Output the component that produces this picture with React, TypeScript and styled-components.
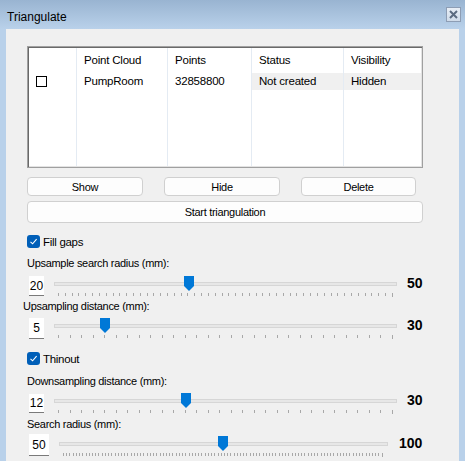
import React from "react";
import styled, { createGlobalStyle } from "styled-components";

const GlobalStyle = createGlobalStyle`
  html, body {
    margin: 0;
    padding: 0;
    overflow: hidden;
  }
  body {
    font-family: "Liberation Sans", Arial, sans-serif;
    font-size: 11px;
    letter-spacing: -0.3px;
    color: #000;
  }
`;

type Col = { title: string; width: number; value: React.ReactNode; shaded?: boolean };

const columns: Col[] = [
  { title: "", width: 48, value: null },
  { title: "Point Cloud", width: 91, value: "PumpRoom" },
  { title: "Points", width: 84, value: "32858800" },
  { title: "Status", width: 92, value: "Not created", shaded: true },
  { title: "Visibility", width: 77, value: "Hidden", shaded: true },
];

type SliderDef = {
  label: string;
  labelShift?: number;
  labelTop: number;
  rowTop: number;
  value: number;
  min: number;
  max: number;
  boxWidth: number;
  boxHeight: number;
  boxTop?: number;
  sliderWidth: number;
  sliderTop?: number;
  labelGap?: number;
};

const App = () => {
  return (
    <>
      <GlobalStyle />
      <Frame>
        <TitleBar>
          <Title>Triangulate</Title>
          <CloseButton>
            <svg width="9" height="9" viewBox="0 0 9 9">
              <path d="M1 1 L8 8 M8 1 L1 8" stroke="#5b6b80" strokeWidth="2" />
            </svg>
          </CloseButton>
        </TitleBar>

        <Body>
          <Table>
            {columns.map((c, i) => (
              <Column key={i} $width={c.width} $last={i === columns.length - 1}>
                <HeadCell>{c.title}</HeadCell>
                <Cell $shaded={c.shaded}>
                  {i === 0 ? <RowCheck /> : c.value}
                </Cell>
              </Column>
            ))}
          </Table>

          <ButtonRow>
            <Button $width={116}>Show</Button>
            <Button $width={116}>Hide</Button>
            <Button $width={115}>Delete</Button>
          </ButtonRow>
          <WideButton>Start triangulation</WideButton>

          <CheckRow $top={12}>
            <BlueCheck />
            <span>Fill gaps</span>
          </CheckRow>

          <SliderField
            label="Upsample search radius (mm):"
            labelTop={8}
            rowTop={6}
            value={20}
            min={1}
            max={50}
            boxWidth={15}
            boxHeight={20}
            sliderWidth={343}
          />
          <SliderField
            label="Upsampling distance (mm):"
            labelShift={-4}
            labelTop={3}
            rowTop={5}
            value={5}
            min={1}
            max={30}
            boxWidth={15}
            boxHeight={21}
            sliderWidth={343}
          />

          <CheckRow $top={13}>
            <BlueCheck />
            <span>Thinout</span>
          </CheckRow>

          <SliderField
            label="Downsampling distance (mm):"
            labelTop={9}
            rowTop={5}
            value={12}
            min={1}
            max={30}
            boxWidth={15}
            boxHeight={19}
            boxTop={1}
            sliderWidth={343}
          />
          <SliderField
            label="Search radius (mm):"
            labelTop={4}
            rowTop={3}
            value={50}
            min={1}
            max={100}
            boxWidth={20}
            boxHeight={22}
            sliderWidth={329}
            sliderTop={2}
            labelGap={11}
          />
        </Body>
      </Frame>
    </>
  );
};

export default App;

const SliderField = (p: SliderDef) => {
  const frac = (p.value - p.min) / (p.max - p.min);
  const range = p.sliderWidth - 8;
  const ticks = Array.from({ length: p.max - p.min + 1 });
  return (
    <>
      <FieldLabel $top={p.labelTop} $shift={p.labelShift ?? 0}>
        {p.label}
      </FieldLabel>
      <SliderRow $top={p.rowTop}>
        <NumberBox $width={p.boxWidth} $height={p.boxHeight} $top={p.boxTop ?? 0}>
          {p.value}
        </NumberBox>
        <Scale $top={p.sliderTop ?? 0}>
          <Slider $width={p.sliderWidth}>
            <Track />
            <Ticks>
              {ticks.map((_, i) => (
                <Tick key={i} $long={i === ticks.length - 1} />
              ))}
            </Ticks>
            <Thumb style={{ left: frac * range }}>
              <svg width="10" height="15" viewBox="0 0 10 15">
                <path d="M0 0 H10 V10 L5 15 L0 10 Z" fill="#0078d7" />
              </svg>
            </Thumb>
          </Slider>
          <MaxLabel $gap={p.labelGap ?? 10}>{p.max}</MaxLabel>
        </Scale>
      </SliderRow>
    </>
  );
};

const RowCheck = () => <SmallBox />;

const BlueCheck = () => (
  <CheckBox>
    <svg width="9" height="9" viewBox="0 0 9 9">
      <path d="M1.5 4.8 L3.6 6.8 L7.6 2.2" stroke="#fff" strokeWidth="1.1" fill="none" />
    </svg>
  </CheckBox>
);

// Estilos
const Frame = styled.div`
  width: 465px;
  height: 461px;
  display: flex;
  flex-direction: column;
  background: #b9d1ea;
`;

const TitleBar = styled.div`
  height: 29px;
  flex-shrink: 0;
  display: flex;
  justify-content: space-between;
  align-items: flex-start;
  background: linear-gradient(#99b4d1, #b9d1ea);
`;

const Title = styled.div`
  margin: 9px 0 0 7px;
  line-height: 16px;
  font-size: 12px;
  letter-spacing: 0;
`;

const CloseButton = styled.div`
  width: 13px;
  height: 13px;
  margin: 7px 4px 0 0;
  border: 1px solid #8d9db4;
  background: linear-gradient(#e8eef6, #cfdbe9);
  display: flex;
  align-items: center;
  justify-content: center;
`;

const Body = styled.div`
  flex: 1;
  margin: 0 6px;
  background: #f0f0f0;
  padding: 17px 0 0 21px;
  display: flex;
  flex-direction: column;
  align-items: flex-start;
`;

const Table = styled.div`
  width: 396px;
  height: 122px;
  box-sizing: border-box;
  border: 1px solid #a0a0a0;
  box-shadow: inset 1px 1px 0 #696969, inset -1px -1px 0 #e3e3e3;
  padding: 1px;
  background: #fff;
  display: flex;
  font-size: 11.5px;
  letter-spacing: -0.2px;
`;

const Column = styled.div<{ $width: number; $last?: boolean }>`
  width: ${(p) => p.$width}px;
  box-sizing: border-box;
  border-right: ${(p) => (p.$last ? "none" : "1px solid #e4ebf3")};
  display: flex;
  flex-direction: column;
`;

const HeadCell = styled.div`
  height: 25px;
  line-height: 25px;
  padding-left: 7px;
  white-space: nowrap;
`;

const Cell = styled.div<{ $shaded?: boolean }>`
  height: 17px;
  line-height: 17px;
  padding-left: 7px;
  background: ${(p) => (p.$shaded ? "#f0f0f0" : "#fff")};
  display: flex;
  align-items: center;
  white-space: nowrap;
`;

const SmallBox = styled.div`
  width: 9px;
  height: 9px;
  border: 1px solid #000;
  background: #fff;
`;

const ButtonRow = styled.div`
  display: flex;
  gap: 21px;
  margin-top: 9px;
`;

const Button = styled.button<{ $width: number }>`
  width: ${(p) => p.$width}px;
  height: 19px;
  padding: 0;
  background: #fdfdfd;
  border: 1px solid #d0d0d0;
  border-radius: 4px;
  font-family: inherit;
  font-size: 11px;
  letter-spacing: -0.3px;
  color: #000;
`;

const WideButton = styled(Button).attrs({ $width: 396 })`
  height: 22px;
  margin-top: 5px;
`;

const CheckRow = styled.div<{ $top: number }>`
  display: flex;
  align-items: center;
  gap: 3px;
  margin-top: ${(p) => p.$top}px;
  height: 13px;
  line-height: 14px;
  font-size: 11.5px;
`;

const CheckBox = styled.div`
  width: 13px;
  height: 13px;
  border-radius: 3px;
  background: #005fb8;
  display: flex;
  align-items: center;
  justify-content: center;
`;

const FieldLabel = styled.div<{ $top: number; $shift: number }>`
  margin-top: ${(p) => p.$top}px;
  margin-left: ${(p) => p.$shift}px;
  line-height: 14px;
  height: 14px;
  white-space: nowrap;
`;

const SliderRow = styled.div<{ $top: number }>`
  display: flex;
  align-items: flex-start;
  margin-top: ${(p) => p.$top}px;
`;

const NumberBox = styled.div<{ $width: number; $height: number; $top: number }>`
  width: ${(p) => p.$width}px;
  height: ${(p) => p.$height - 1}px;
  margin: ${(p) => p.$top}px 0 0 2px;
  background: #fff;
  border-bottom: 1px solid #7a7a7a;
  display: flex;
  align-items: center;
  justify-content: center;
  font-size: 12px;
  letter-spacing: 0;
`;

const Scale = styled.div<{ $top: number }>`
  display: flex;
  align-items: flex-start;
  margin: ${(p) => p.$top}px 0 0 10px;
`;

const Slider = styled.div<{ $width: number }>`
  position: relative;
  width: ${(p) => p.$width}px;
  height: 20px;
`;

const Track = styled.div`
  margin-top: 6px;
  height: 2px;
  border: 1px solid #d6d6d6;
  background: #e7e7e7;
`;

const Ticks = styled.div`
  display: flex;
  justify-content: space-between;
  align-items: flex-start;
  margin: 7px 4px 0;
`;

const Tick = styled.div<{ $long?: boolean }>`
  width: 1px;
  height: ${(p) => (p.$long ? 4 : 3)}px;
  background: #a8a8a8;
`;

const Thumb = styled.div`
  position: absolute;
  top: 0;
  width: 10px;
  height: 15px;
  display: flex;
`;

const MaxLabel = styled.div<{ $gap: number }>`
  margin-left: ${(p) => p.$gap}px;
  line-height: 14px;
  font-size: 14px;
  font-weight: bold;
  letter-spacing: 0;
`;
